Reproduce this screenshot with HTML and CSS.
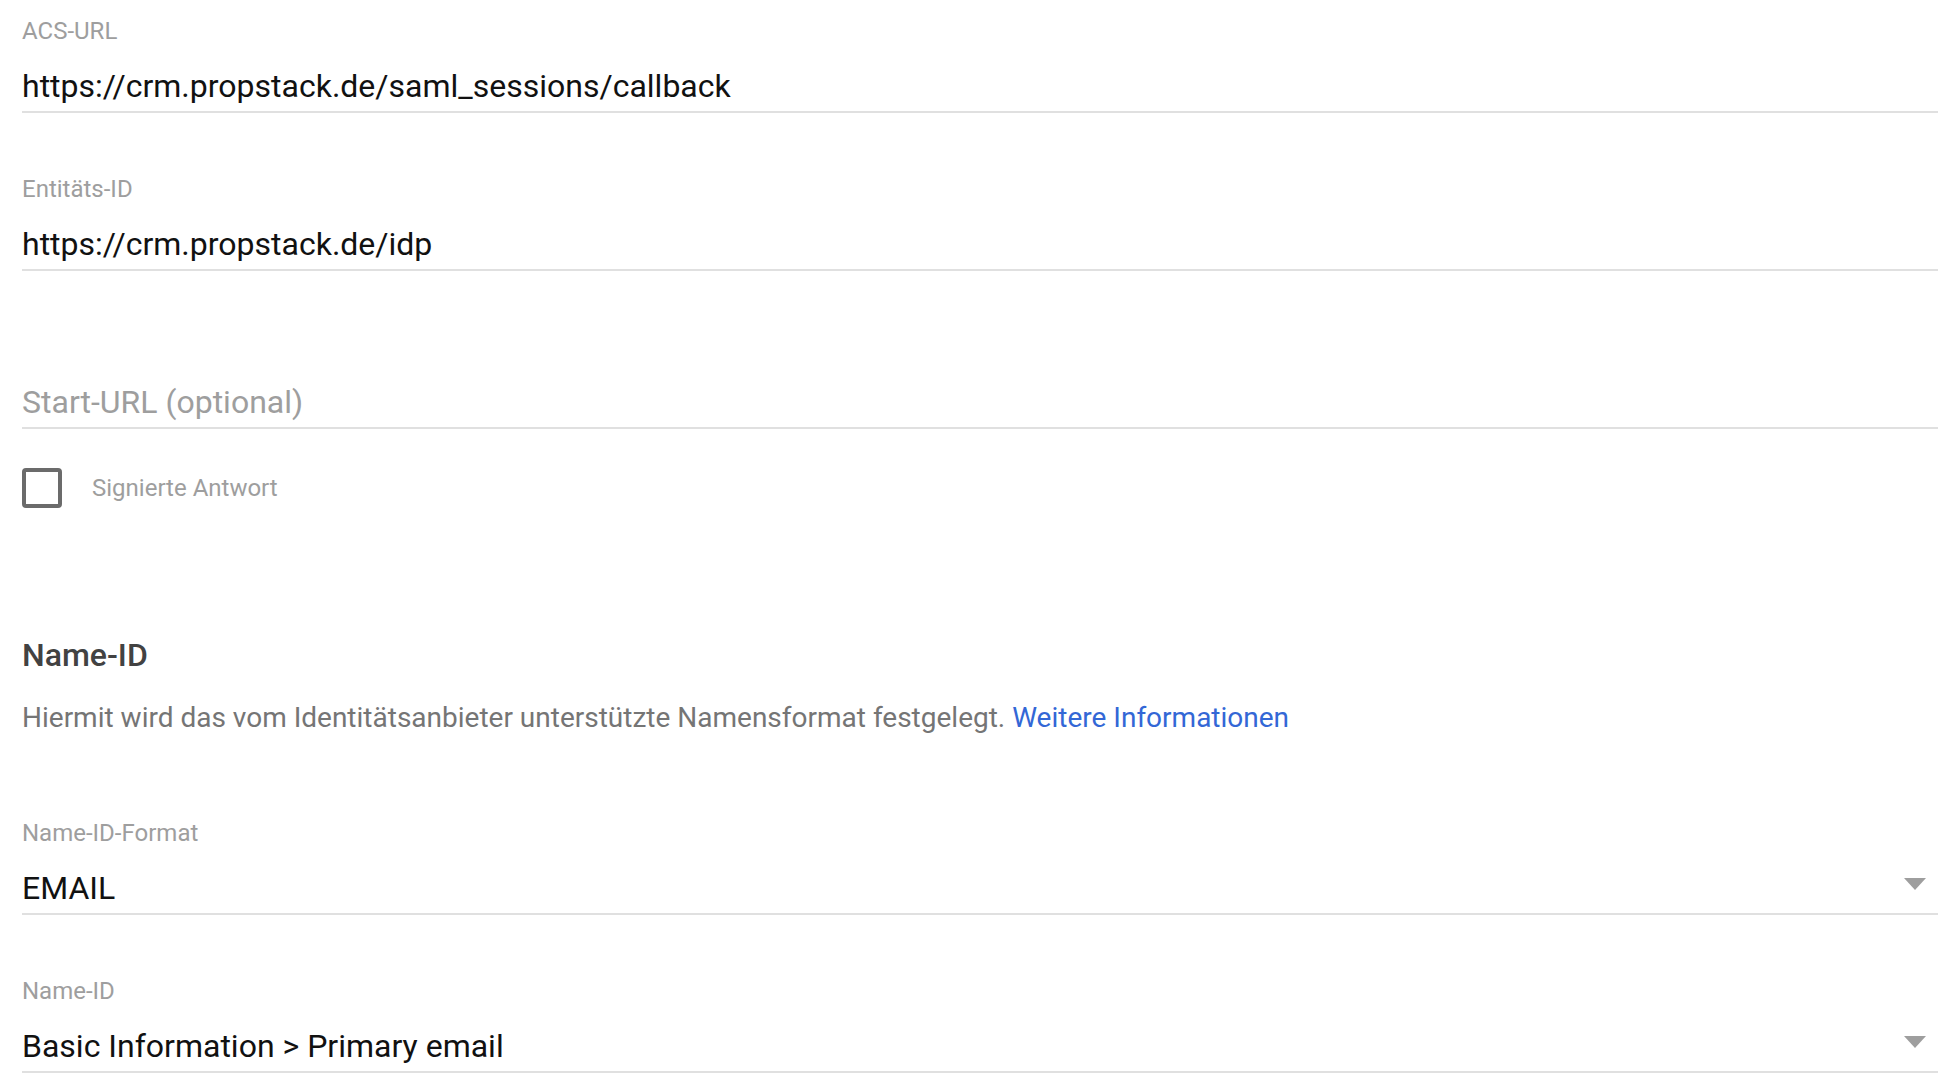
FILE: index.html
```html
<!DOCTYPE html>
<html lang="de">
<head>
<meta charset="utf-8">
<title>SAML</title>
<link rel="stylesheet" href="styles.css">
</head>
<body>
<div class="form">
  <div class="field">
    <div class="label">ACS-URL</div>
    <div class="value">https://crm.propstack.de/saml_sessions/callback</div>
  </div>
  <div class="field">
    <div class="label">Entitäts-ID</div>
    <div class="value">https://crm.propstack.de/idp</div>
  </div>
  <div class="field">
    <div class="label"></div>
    <div class="value placeholder">Start-URL (optional)</div>
  </div>
  <label class="check-row">
    <span class="checkbox"></span>
    <span class="check-label">Signierte Antwort</span>
  </label>
  <h2 class="heading">Name-ID</h2>
  <p class="desc">Hiermit wird das vom Identitätsanbieter unterstützte Namensformat festgelegt. <a class="link" href="#">Weitere Informationen</a></p>
  <div class="field">
    <div class="label">Name-ID-Format</div>
    <div class="value select">
      <span>EMAIL</span>
      <svg class="arrow" width="22" height="12" viewBox="0 0 22 12"><path d="M0 0h22L11 12z" fill="#9e9e9e"/></svg>
    </div>
  </div>
  <div class="field">
    <div class="label">Name-ID</div>
    <div class="value select">
      <span>Basic Information &gt; Primary email</span>
      <svg class="arrow" width="22" height="12" viewBox="0 0 22 12"><path d="M0 0h22L11 12z" fill="#9e9e9e"/></svg>
    </div>
  </div>
</div>
</body>
</html>
```
FILE: styles.css
```css
html, body {
  margin: 0;
  padding: 0;
  background: #ffffff;
}
body {
  font-family: Roboto, "Liberation Sans", Arial, sans-serif;
  color: #212121;
}
.form {
  padding: 0 20px 0 22px;
  display: flex;
  flex-direction: column;
}
.field {
  padding-top: 15px;
  padding-bottom: 3px;
  border-bottom: 2px solid #e0e0e0;
  margin-bottom: 45px;
}
.label {
  font-size: 24px;
  line-height: 32px;
  height: 32px;
  color: #9e9e9e;
}
.value {
  margin-top: 17px;
  font-size: 32px;
  line-height: 44px;
  color: #111111;
  white-space: nowrap;
}
.placeholder {
  color: #9e9e9e;
}
.select {
  display: flex;
  justify-content: space-between;
  align-items: flex-start;
}
.arrow {
  margin-top: 12px;
  margin-right: 12px;
}
.check-row {
  display: flex;
  align-items: center;
  gap: 30px;
  margin-top: -6px;
  height: 40px;
}
.checkbox {
  box-sizing: border-box;
  width: 40px;
  height: 40px;
  border: 4px solid #6b6b6b;
  border-radius: 4px;
}
.check-label {
  font-size: 24px;
  line-height: 38px;
  color: #9e9e9e;
}
.heading {
  margin: 127px 0 0 0;
  font-size: 32px;
  line-height: 40px;
  font-weight: 500;
  color: #424242;
}
.desc {
  margin: 23px 0 64px 0;
  font-size: 28px;
  line-height: 40px;
  color: #757575;
}
.link {
  color: #3367d6;
  text-decoration: none;
}
```
